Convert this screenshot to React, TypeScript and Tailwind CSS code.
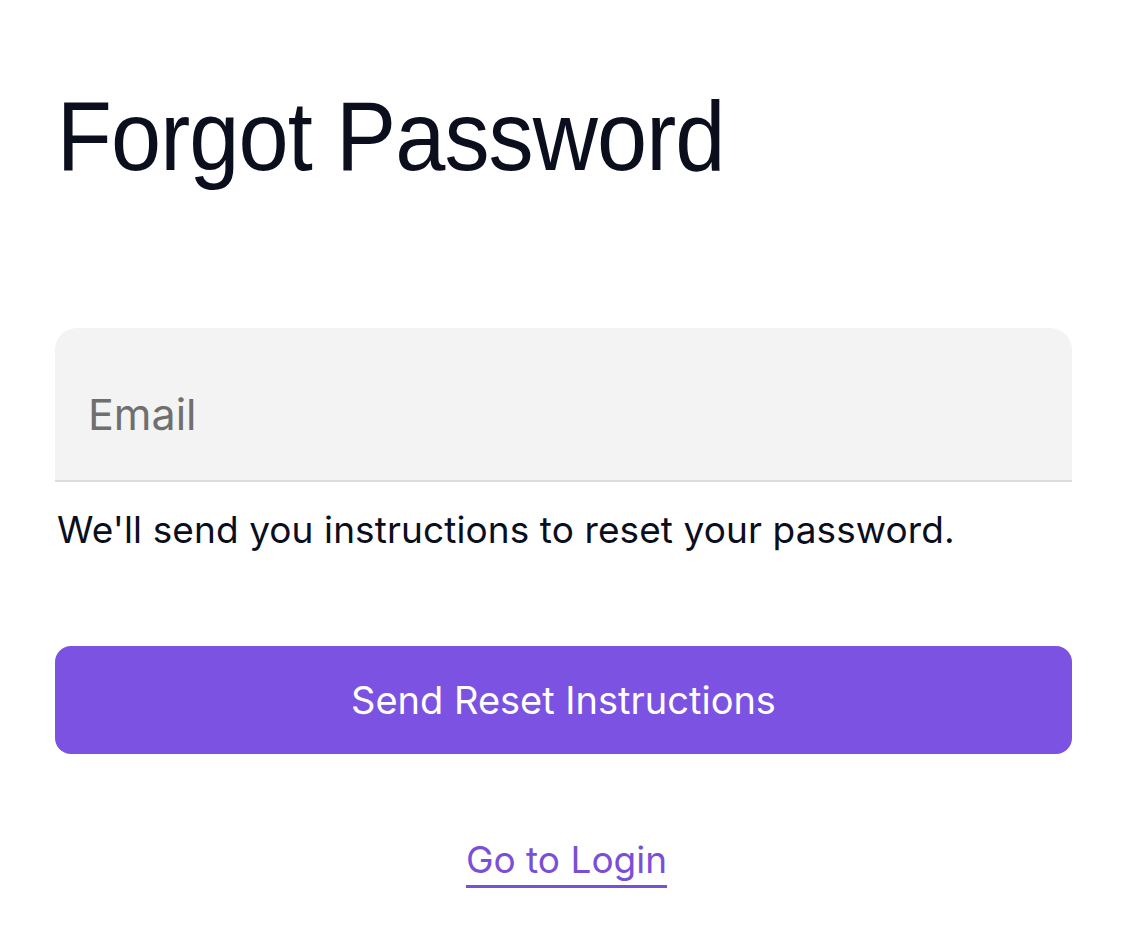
import React from 'react';

export default function App() {
  const [email, setEmail] = React.useState('');

  return (
    <div className="min-h-screen bg-white font-['Inter','Noto_Sans',sans-serif]">
      <div className="ml-[55px] w-[1017px] pt-[87px]">
        <h1 className="origin-left scale-x-[0.92] font-['Liberation_Sans','Inter',sans-serif] text-[98px] leading-none font-normal tracking-[-1px] text-[#0b0e1d] pl-[2px] whitespace-nowrap">
          Forgot Password
        </h1>

        <div className="mt-[143px] h-[154px] rounded-t-[22px] bg-[#f3f3f3] border-b-2 border-[#dcdcdc] flex items-center">
          <input
            type="email"
            value={email}
            onChange={e => setEmail(e.target.value)}
            placeholder="Email"
            className="w-full bg-transparent outline-none px-[33px] pt-[20px] text-[43px] text-[#0b0e1d] placeholder:text-[#6f6f6f]"
          />
        </div>

        <p className="mt-[24px] pl-[2px] text-[37px] leading-[48px] tracking-[0.1px] text-[#0b0e1d]">
          We'll send you instructions to reset your password.
        </p>

        <button
          type="button"
          className="mt-[92px] w-full h-[108px] rounded-[16px] bg-[#7b52e1] text-white text-[38px] flex items-center justify-center"
        >
          Send Reset Instructions
        </button>

        <div className="mt-[82px] flex justify-center">
          <a
            href="#"
            className="pl-[6px] text-[37px] leading-[48px] text-[#7a4fd8] underline decoration-[3px] underline-offset-[12px]"
          >
            Go to Login
          </a>
        </div>
      </div>
    </div>
  );
}
